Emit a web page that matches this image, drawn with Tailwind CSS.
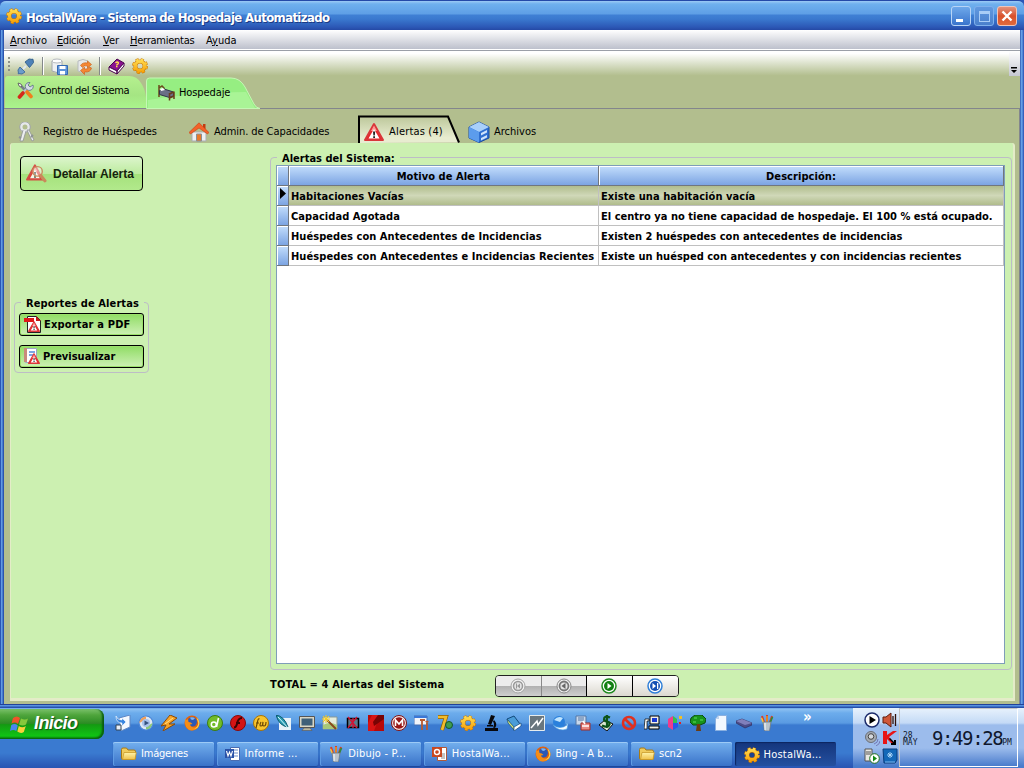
<!DOCTYPE html>
<html lang="es">
<head>
<meta charset="utf-8">
<title>HostalWare</title>
<script src="https://cdn.jsdelivr.net/npm/@tailwindcss/browser@4"></script>
</head>
<body class="w-[1024px] h-[768px] overflow-hidden flex flex-col font-['DejaVu_Sans_Condensed','DejaVu_Sans',sans-serif] [font-stretch:condensed] text-[11px] leading-[14px] text-black whitespace-nowrap">

<svg class="absolute size-0">
  <defs>
    <linearGradient id="gy" gradientUnits="userSpaceOnUse" x1="0" y1="0" x2="0" y2="16"><stop stop-color="#ffe45a"/><stop offset="1" stop-color="#f79a00"/></linearGradient>
    <linearGradient id="fo" x2="0" y2="1"><stop stop-color="#fff3a8"/><stop offset="1" stop-color="#efc14a"/></linearGradient>
    <symbol id="gear" viewBox="0 0 16 16"><circle cx="8" cy="8" r="6.400" fill="none" stroke="#c97400" stroke-width="3" stroke-dasharray="2.900 2.126"/><circle cx="8" cy="8" r="4.600" fill="none" stroke="#c97400" stroke-width="4"/><circle cx="8" cy="8" r="6.200" fill="none" stroke="url(#gy)" stroke-width="2.400" stroke-dasharray="2.400 2.470" stroke-dashoffset="-.2"/><circle cx="8" cy="8" r="4.600" fill="none" stroke="url(#gy)" stroke-width="3"/></symbol>
    <symbol id="warn" viewBox="0 0 20 20"><path d="M10 2 19 18H1Z" fill="#e8262a" stroke="#d9363a" stroke-width="2" stroke-linejoin="round"/><path d="M10 3.500 13 9H7Z" fill="#ff9a96"/><path d="M10 7 15.500 16.500H4.500Z" fill="#fff"/><path d="M9 9.500h2.200l-.4 4H9.400zM9.200 14.300h1.800v1.600H9.200z" fill="#222"/></symbol>
    <symbol id="folder" viewBox="0 0 16 16"><path d="M.5 3.500q0-1.500 1.500-1.500h3.500l1.500 2h6q1.500 0 1.500 1.500V12q0 1.500-1.500 1.500H2Q.5 13.500.5 12Z" fill="#f0cb5c" stroke="#a87a14"/><path d="M3 6.500h12.300l-1.300 7H1.500Z" fill="url(#fo)" stroke="#c99a2c" stroke-width=".8"/></symbol>
    <symbol id="firefox" viewBox="0 0 16 16"><circle cx="8" cy="8" r="7.500" fill="#e0620d"/><circle cx="8.200" cy="6.800" r="4.800" fill="#2b58b5"/><path d="M6 2.500q3-1 5 .8l-2 1.700-2-.5Z" fill="#7fb4ee"/><path d="M1 4Q0 15 8 15.500 15 15 15.500 8q-1 4.500-5.500 4.500-3 0-4-3l2.500-.6Q7 7 4.500 7L4 4 2.500 5Z" fill="#f58d16"/><path d="M12.500 2.500q3.500 3 2.700 7-1 4-5 4.500 4-2.500 4-6Z" fill="#ffd24a"/></symbol>
    <symbol id="paint" viewBox="0 0 16 16"><path d="m3 1 3 9M8 0v10M13 1l-3 9" stroke-width="2" stroke="#d8402a" fill="none"/><path d="m2.500 3 3 7" stroke="#f4c63a" stroke-width="1.500"/><path d="M13.500 2 10 10" stroke="#33883b" stroke-width="1.800"/><path d="M8 1v9" stroke="#e9932a" stroke-width="1.600"/><path d="M4 7h8l-1.500 9h-5Z" fill="#b9c4cc" stroke="#6a7a88" stroke-width=".8"/><path d="M6 8v7" stroke="#fff"/></symbol>
  </defs>
</svg>

<!-- application window -->
<section class="h-[708px] flex flex-col bg-[#2a57b8]">
  <header class="h-[30px] shrink-0 flex items-center pl-[6px] pr-[7px] border-t border-[#2449a8] rounded-t-[6px] bg-[linear-gradient(#9ccaf5_0px,#6fb0ee_3px,#5e9fe6_13px,#3f80d5_14px,#3a79cf_18px,#2c58b6_26px,#2549a5_29px)]">
    <svg class="size-[16px]"><use href="#gear"/></svg>
    <h1 class="ml-[4px] mt-[4px] font-bold text-[13px] leading-[18px] tracking-[-0.620px] text-white [text-shadow:1px_1px_0_#1b3a86]">HostalWare - Sistema de Hospedaje Automatizado</h1>
    <div class="ml-auto flex gap-[3px] mt-px">
      <div class="size-[20px] rounded-[3px] border border-[#b8d4f6] bg-linear-to-b from-[#6ea8ea] to-[#3a74cc] flex items-end pl-[4px] pb-[3px]"><div class="w-[7px] h-[3px] bg-white"></div></div>
      <div class="size-[20px] rounded-[3px] border border-[#7fb0ec] bg-linear-to-b from-[#6199e0] to-[#4a80cc] flex items-center justify-center"><div class="w-[11px] h-[11px] border border-t-[3px] border-[#a9cdf6]"></div></div>
      <div class="size-[20px] rounded-[3px] border border-[#f0c4b8] bg-linear-to-b from-[#e2917a] via-[#d8512c] to-[#e06a3c] flex items-center justify-center"><svg class="size-[12px]" viewBox="0 0 12 12"><path d="m1.500 1.500 9 9m0-9-9 9" stroke="#fff" stroke-width="2.400"/></svg></div>
    </div>
  </header>

  <div class="grow flex flex-col pl-[4px] pr-[4px] bg-[linear-gradient(90deg,#2a55b5_0,#2a55b5_1px,#6aa3e8_1px,#5a92dc_2px,#3467c2_3px,#22429a_4px,#22429a_1020px,#5f9be6_1021px,#6aa3e8_1022px,#3b6cc5_1023px,#2a55b5_1024px)]">
    <nav class="h-[20px] flex items-center pt-[2px] bg-linear-to-b from-white to-[#bdc0cc] border-b border-white pl-[6px]">
      <span class="w-[47px]"><u>A</u>rchivo</span><span class="w-[46px] tracking-[-0.400px]"><u>E</u>dición</span><span class="w-[27px]"><u>V</u>er</span><span class="w-[76px] tracking-[-0.250px]"><u>H</u>erramientas</span><span>A<u>y</u>uda</span>
    </nav>
    <div class="h-[26px] flex items-center border-t border-[#9b9fa8] bg-linear-to-b from-white from-10% to-[#b1bd8c] pl-[4px] [&>svg]:mt-[5px]">
      <div class="w-[2px] h-[16px] mt-[3px] bg-[repeating-linear-gradient(#8e9188_0,#8e9188_2px,transparent_2px,transparent_4px)]"></div>
      <svg class="ml-[7px] size-[17px]" viewBox="0 0 17 17"><path d="m1 16 3-3M13 4l3-3" stroke="#5b86b5" stroke-width="1.500"/><path d="M3 9 8 14 5 16 1.500 15.500 1 12Z" fill="#6c9dcb" stroke="#45719e"/><path d="M8 4 12 1l4 .5.500 3-4 5Z" fill="#4d82b8" stroke="#3a668f"/><path d="m6 11 3-3" stroke="#dfe9f2" stroke-width="2"/></svg>
      <div class="ml-[8px] mt-[4px] w-px h-[18px] bg-[#83888a] shadow-[1px_0_0_#fff]"></div>
      <svg class="ml-[8px] size-[17px]" viewBox="0 0 17 17"><path d="M1 3q5-3 10 0v10q-5 3-10 0Z" fill="#eef0f2" stroke="#a3a8ac"/><ellipse cx="6" cy="3" rx="5" ry="2" fill="#fff" stroke="#b7bbbf"/><path d="M6.500 7.500h10v9h-10Z" fill="#5d93d8" stroke="#336ab4"/><path d="M8.500 8h6v3h-6zM9 13h5v3.500H9z" fill="#fff"/></svg>
      <svg class="ml-[8px] size-[17px]" viewBox="0 0 17 17"><path d="M2 3q5-3 10 0v10q-5 3-10 0Z" fill="#e6e8ea" stroke="#b7bbbf"/><path d="M4.500 7.500q2-3.500 7-2.500V3l4 3.500-4 3.500V8q-4-1-5 1.500ZM15.500 10q-1 4.500-7 4v2.500l-4-4 4-3.500v2q4 .5 5-2Z" fill="#f58634" stroke="#c85a12" stroke-width=".6"/></svg>
      <div class="ml-[6px] mt-[4px] w-px h-[18px] bg-[#83888a] shadow-[1px_0_0_#fff]"></div>
      <svg class="ml-[8px] size-[17px]" viewBox="0 0 17 17"><path d="m1 9 8-8 7 4-7 8Z" fill="#8a1290" stroke="#4a0350"/><path d="m1 9 8 4v3l-8-4ZM9 13l7-8v3l-7 8Z" fill="#fff" stroke="#4a0350"/><path d="M7.500 5q2-2 3 0 0 1-2 2M8 8.500h1.500" stroke="#ffe14a" stroke-width="1.400" fill="none"/></svg>
      <svg class="ml-[7px] size-[16px]"><use href="#gear"/></svg>
      <div class="ml-auto w-[11px] h-full bg-linear-to-b from-white to-[#c5c7d2] flex items-end justify-center pb-[2px]"><svg class="size-[7px]" viewBox="0 0 7 7"><path d="M0 0h6v1.500H0zM0 3h6L3 6Z"/></svg></div>
    </div>

    <!-- main tabs -->
    <div class="h-[33px] bg-[#b2be8e] border-b border-[#83868c] flex pl-px">
      <div class="relative w-[141px] h-[32px]">
        <svg class="absolute inset-0 w-[141px] h-[32px]" viewBox="0 0 141 32"><defs><linearGradient id="t1" x2="0" y2="1"><stop stop-color="#b5f08f"/><stop offset=".6" stop-color="#a5e583"/><stop offset="1" stop-color="#aaf48c"/></linearGradient></defs><path d="M0 32V3q0-3 3-3h121q8 0 12 7 4 6 5 14v11Z" fill="url(#t1)"/></svg>
        <div class="relative flex items-center h-[29px] pl-[12px]">
          <svg class="size-[17px]" viewBox="0 0 17 17"><path d="m3 3 6 6" stroke="#777f8c" stroke-width="2.500"/><path d="m1 1 3 1 1 2-1 1-2-1Z" fill="#eee" stroke="#555" stroke-width=".8"/><path d="M12 5 5 12" stroke="#b9c2d2" stroke-width="3"/><path d="M16 3a4 4 0 1 1-3-2.500l-2 2.500 2 2Z" fill="#d5dbe6" stroke="#5a6a86" stroke-width=".8"/><path d="M6 11 2.500 15" stroke="#d42a1a" stroke-width="3.600" stroke-linecap="round"/><path d="m10 10 4 4.500" stroke="#f07e1c" stroke-width="3.600" stroke-linecap="round"/></svg>
          <span class="ml-[5px] tracking-[-0.360px]">Control del Sistema</span>
        </div>
      </div>
      <div class="relative w-[114px] h-[33px]">
        <svg class="absolute inset-0 w-[114px] h-[33px]" viewBox="0 0 114 33"><path d="M.5 32.500V5q0-3 3-3H85q9 0 14 9l9 17q2 4 6 4.500Z" fill="#96ee82" stroke="#c4f8b4"/><path d="M2 32V24q50-8 98-8l9 16Z" fill="#b6f8a4" opacity=".6"/></svg>
        <div class="relative flex items-center h-[33px] pl-[12px]">
          <svg class="size-[17px]" viewBox="0 0 17 17"><path d="M1 1v12M1 4l3-2 2 2v3" stroke="#6b4a1c" stroke-width="1.500" fill="none"/><path d="M1.500 6.500 6 5l9.500 3v4l-4 1.500-10-3Z" fill="#6a6f86" stroke="#33364a"/><path d="m2 5 3-1 2 2-4 1Z" fill="#fff"/><path d="M11.500 9v7.500M16 7.500V15M11.500 10l4-2M11.500 14 16 12" stroke="#6b3d1c" stroke-width="1.500"/></svg>
          <span class="ml-[4px] tracking-[-0.100px]">Hospedaje</span>
        </div>
      </div>
    </div>

    <!-- secondary tabs -->
    <div class="grow bg-[#b2be8e] border-r border-[#83868c] flex flex-col pl-[6px] pr-[4px] pb-[3px]">
      <div class="h-[34px] flex pl-[7px]">
        <div class="w-[172px] flex items-center pt-[12px]">
          <svg class="size-[21px] -ml-px" viewBox="0 0 21 21"><circle cx="9" cy="5" r="4" fill="none" stroke="#e6e8ea" stroke-width="3"/><circle cx="9" cy="5" r="5.300" fill="none" stroke="#8e9394" stroke-width=".8"/><path d="M7 8 4 19h3l3-10M11 8l5 11 2-1-5-10Z" fill="#eceef0" stroke="#8e9394" stroke-width=".8"/><path d="m5 16-2-1m12 0 2-2" stroke="#8e9394" stroke-width="2"/></svg>
          <span class="ml-[6px]">Registro de Huéspedes</span>
        </div>
        <div class="w-[169px] flex items-center pt-[12px]">
          <svg class="size-[20px]" viewBox="0 0 20 20"><path d="M3 10h14v9H3Z" fill="#eef0f2" stroke="#a9adb2"/><path d="M14 2h2.500v5H14Z" fill="#c43a10"/><path d="M10 .8 20 10.500l-1.500 1.500L10 6l-8.500 6L0 10.500Z" fill="#f4622a" stroke="#c8400f" stroke-width=".6"/><path d="M7.500 12h5v7h-5Z" fill="#e87a2a" stroke="#8b8f95"/></svg>
          <span class="ml-[5px] tracking-[-0.070px]">Admin. de Capacidades</span>
        </div>
        <div class="relative w-[104px]">
          <svg class="absolute left-0 bottom-0 w-[104px] h-[28px]" viewBox="0 0 104 28"><defs><linearGradient id="t2" x2="0" y2="1"><stop stop-color="#bcc79a"/><stop offset=".8" stop-color="#e8ecd0"/></linearGradient></defs><path d="M1 28V1.500H90L101 27.500" fill="url(#t2)" stroke="#000" stroke-width="2"/></svg>
          <div class="relative flex items-center h-full pt-[12px] pl-[6px]">
            <svg class="size-[20px]"><use href="#warn"/></svg><span class="ml-[5px] tracking-[0.180px]">Alertas (4)</span>
          </div>
        </div>
        <div class="flex items-center pt-[12px] pl-[6px]">
          <svg class="size-[22px]" viewBox="0 0 22 22"><path d="M11 1 21 6v11l-10 4.500L1 17V6Z" fill="#2f6fd0" stroke="#1c4ca0"/><path d="M11 1 21 6l-10 5L1 6Z" fill="#a9d0fa"/><path d="M1 6l10 5v10.500L1 17Z" fill="#5c9cec"/><path d="m13 12 6-3v2.500l-6 3Zm0 5 6-3v2.500l-6 3Z" fill="#cfe3fb"/></svg>
          <span class="ml-[4px]">Archivos</span>
        </div>
      </div>

      <main class="grow bg-[#ccf0b1] border-r-2 border-l border-b-[3px] border-[#e4ecc8] rounded-t-[3px] flex pl-[3px]">
        <aside class="w-[256px] pt-[13px]">
          <button class="ml-[6px] w-[123px] h-[35px] rounded-[4px] border border-black bg-[linear-gradient(#dcf5cc,#bdeb9f_50%,#a5e27c_52%,#b2e98c)] flex items-center pl-[5px]">
            <svg class="size-[21px]" viewBox="0 0 20 20"><use href="#warn" width="17" height="18" opacity=".85"/><circle cx="11" cy="8" r="4.500" fill="#ffffff66" stroke="#c98a5a" stroke-width="1.300"/><path d="m14 12 4 5" stroke="#c98a5a" stroke-width="3" stroke-linecap="round"/></svg>
            <span class="ml-[6px] font-['Liberation_Sans',sans-serif] font-bold text-[12px] text-[#14240c]">Detallar Alerta</span>
          </button>
          <fieldset class="mt-[104px] w-[135px] h-[78px] border border-[#bdbdc6] rounded-[4px] pl-[4px] pt-[3px]">
            <legend class="ml-[2px] px-[5px] h-[15px] leading-[17px] font-bold tracking-[0.100px]">Reportes de Alertas</legend>
            <button class="w-[125px] h-[23px] rounded-[3px] border border-black shadow-[inset_0_0_0_1px_#9be06c] bg-linear-to-b from-[#8fdc62] to-[#cdf0b4] flex items-center pl-[4px]">
              <svg class="size-[17px]" viewBox="0 0 17 17"><path d="M3.500.5h9l4 4v12h-13Z" fill="#fff" stroke="#222"/><path d="M0 2h10v4H0Z" fill="#e01818"/><path d="M12 0l5 5h-5Z" fill="#c01818"/><use href="#warn" x="4" y="4" width="12" height="13"/></svg>
              <span class="ml-[3px] font-bold tracking-[0.180px]">Exportar a PDF</span>
            </button>
            <button class="mt-[9px] w-[125px] h-[23px] rounded-[3px] border border-black shadow-[inset_0_0_0_1px_#9be06c] bg-linear-to-b from-[#8fdc62] to-[#cdf0b4] flex items-center pl-[4px]">
              <svg class="size-[17px]" viewBox="0 0 17 17"><path d="M1.500.5h11v14h-11Z" fill="#fff" stroke="#9aa6c4"/><path d="M0 0h3v14H0Z" fill="#c98a7c"/><path d="M5 3h6v2H5zM5 6h5v2H5z" fill="#7ea6e4"/><use href="#warn" x="4" y="4" width="12" height="13"/></svg>
              <span class="ml-[2px] font-bold">Previsualizar</span>
            </button>
          </fieldset>
        </aside>
        <div class="flex flex-col pt-[7px]">
          <fieldset class="w-[742px] h-[520px] border border-[#bdbdc6] rounded-[4px] pl-[5px]">
            <legend class="ml-[1px] px-[5px] h-[15px] leading-[17px] font-bold">Alertas del Sistema:</legend>
            <div class="w-[729px] h-[499px] bg-white border border-[#7f9db9] font-bold tracking-[0.060px]">
              <div class="grid grid-cols-[12px_310px_1fr] grid-rows-[20px_20px_20px_20px_20px] [&>*]:border-b [&>*]:border-r [&>*]:border-[#c0c0c0] [&>*]:leading-[21px] [&>*]:pl-[2px] [&>.h]:border-[#70767e] [&>.h]:bg-linear-to-b [&>.h]:from-[#c4defc] [&>.h]:to-[#7ca4e2] [&>.h]:pl-0 [&>.h]:text-center [&>.h]:shadow-[inset_1px_1px_0_#fff]">
                <div class="h"></div><div class="h">Motivo de Alerta</div><div class="h">Descripción:</div>
                <div class="h pt-[2px]"><svg class="ml-[3px] w-[6px] h-[11px]" viewBox="0 0 6 11"><path d="M0 0l6 5.500L0 11Z"/></svg></div><div class="bg-linear-to-b from-[#b0bc8c] via-[#d0d8b8] to-[#b0bc8c]">Habitaciones Vacías</div><div class="bg-linear-to-b from-[#b0bc8c] via-[#d0d8b8] to-[#b0bc8c]">Existe una habitación vacía</div>
                <div class="h"></div><div>Capacidad Agotada</div><div><span class="tracking-[0.020px]">El centro ya no tiene capacidad de hospedaje. El 100 % está ocupado.</span></div>
                <div class="h"></div><div>Huéspedes con Antecedentes de Incidencias</div><div><span class="tracking-[0.020px]">Existen 2 huéspedes con antecedentes de incidencias</span></div>
                <div class="h"></div><div><span class="tracking-[0.080px]">Huéspedes con Antecedentes e Incidencias Recientes</span></div><div><span class="tracking-[0.020px]">Existe un huésped con antecedentes y con incidencias recientes</span></div>
              </div>
            </div>
          </fieldset>
          <div class="flex pt-[5px]">
            <strong class="w-[225px] pt-[3px] tracking-[0.170px]">TOTAL = 4 Alertas del Sistema</strong>
            <div class="flex w-[184px] h-[22px] rounded-[4px] border border-[#222] overflow-hidden [&>*]:w-[46px] [&>*]:flex [&>*]:items-center [&>*]:justify-center [&>*]:border-r [&>*:last-child]:border-r-0">
              <div class="bg-[linear-gradient(#ececec_50%,#b0b0b0_50%,#cfcfcf)] border-[#888]"><svg class="size-[16px]" viewBox="0 0 16 16"><circle cx="8" cy="8" r="7" fill="#f0f0f0" stroke="#a4a4a4"/><circle cx="8" cy="8" r="4.500" fill="#e4e4e4" stroke="#999" stroke-width="1.500"/><path d="M6 5.500h1v5H6zM10 5.500v5L7 8Z" fill="#999"/></svg></div>
              <div class="bg-[linear-gradient(#ececec_50%,#b0b0b0_50%,#cfcfcf)] border-black"><svg class="size-[16px]" viewBox="0 0 16 16"><circle cx="8" cy="8" r="7" fill="#f0f0f0" stroke="#888"/><circle cx="8" cy="8" r="4.500" fill="#e4e4e4" stroke="#777" stroke-width="1.800"/><path d="M9.500 5v6L5.500 8Z" fill="#666"/></svg></div>
              <div class="bg-linear-to-b from-white to-[#dcd9d0] border-black"><svg class="size-[16px]" viewBox="0 0 16 16"><circle cx="8" cy="8" r="7" fill="#fff" stroke="#1f8a1f" stroke-width="1.500"/><circle cx="8" cy="8" r="5" fill="#128012"/><path d="M6.500 5v6L10.500 8Z" fill="#fff"/></svg></div>
              <div class="bg-linear-to-b from-white to-[#dcd9d0]"><svg class="size-[16px]" viewBox="0 0 16 16"><circle cx="8" cy="8" r="7" fill="#fff" stroke="#2f7fd8" stroke-width="1.500"/><circle cx="8" cy="8" r="5" fill="#1450b4"/><path d="M5.500 5v6L9 8ZM10 5h1.300v6H10Z" fill="#fff"/></svg></div>
            </div>
          </div>
        </div>
      </main>
    </div>
    <div class="h-[4px] -mx-[4px] bg-[linear-gradient(#22429a_0,#22429a_1px,#5f9be6_1px,#4f8ad8_2px,#2c58b6_3px,#2449a0_4px)]"></div>
  </div>
</section>

<!-- taskbar -->
<footer class="h-[60px] flex text-white bg-[linear-gradient(#5f9be6_0px,#8cc0f2_1px,#6cacec_5px,#5a9be2_15px,#3a7ad0_17px,#3a7ad0_45px,#2a56b4_59px)]">
  <div class="w-[113px]">
    <div class="w-[104px] h-[30px] mt-px rounded-r-[8px] bg-[linear-gradient(#7ac06a,#4fa53c_20%,#2c8c24_48%,#149a12_52%,#10c414_90%,#0b8a10)] shadow-[inset_-2px_-1px_2px_#0a5c10] flex items-center pl-[10px]">
      <svg class="size-[19px]" viewBox="0 0 19 19"><path d="M3 3q4-3 7 0L8 9Q5 6.500 1.500 8.500Z" fill="#f0542a"/><path d="M11 3.500q4 2 7 0L16 9.500q-3 2-7 0Z" fill="#86c83c"/><path d="M1.300 10q3.500-2 6.500.5L6.300 16Q3.500 14 0 16Z" fill="#4a86f0"/><path d="M8.800 11q3.500 2.500 7 0l-2 6q-3 2-6.500-.5Z" fill="#fbd03a"/></svg>
      <span class="ml-[5px] -mt-[2px] font-['Liberation_Sans',sans-serif] font-bold italic text-[18px] leading-[20px] tracking-[-0.600px] [text-shadow:1px_1px_1px_#14501a]">Inicio</span>
    </div>
  </div>
  <div class="w-[740px] flex flex-col">
    <div class="h-[34px] flex items-center pb-[4px] -ml-[2px] [&>svg]:w-[16px] [&>svg]:h-[16px] [&>svg]:mx-[3.520px] [&>svg]:shrink-0">
      <svg viewBox="0 0 16 16"><path d="m4 3 11-3v12l-9 4Z" fill="#f4f8fe" stroke="#5d86c4"/><path d="M1 1q1 4 6 4V3l4 4-4 4V8Q1 8 1 1Z" fill="#3a86e0" stroke="#fff" stroke-width=".6"/><path d="M1 10h5v5H1Z" fill="#e8eef8" stroke="#345"/></svg>
      <svg viewBox="0 0 16 16"><circle cx="8" cy="8" r="7" fill="#dfe8f4" stroke="#4a86d8" stroke-width="1.200"/><path d="M1.500 8A6.500 6.500 0 0 1 8 1.500V4Z" fill="#f0a05a"/><path d="M14.500 8A6.500 6.500 0 0 1 8 14.500V12Z" fill="#8cc878"/><circle cx="8" cy="8" r="4" fill="#a8c2ec"/><path d="M6.500 5.500v5L11 8Z" fill="#34507c"/></svg>
      <svg viewBox="0 0 16 16"><path d="M9 0 16 3 8 9 14 9 2 16 5 10 0 11Z" fill="#f7a428" stroke="#8a4a08"/><path d="m4 9 8-6" stroke="#ffe08a"/></svg>
      <svg><use href="#firefox"/></svg>
      <svg viewBox="0 0 16 16"><circle cx="8" cy="8" r="7.500" fill="#72bc28" stroke="#3c7c10"/><circle cx="6.800" cy="9.500" r="2.500" fill="none" stroke="#fff" stroke-width="1.500"/><path d="M11.500 3 9.500 12" stroke="#fff" stroke-width="1.600"/></svg>
      <svg viewBox="0 0 16 16"><circle cx="8" cy="8" r="7.500" fill="#d41414" stroke="#8a0808"/><path d="M12 3Q8 3 7 9 6 12.500 4 12.500M6 8h4" stroke="#3a0404" stroke-width="2" fill="none"/></svg>
      <svg viewBox="0 0 16 16"><circle cx="8" cy="8" r="7.500" fill="#f8c42c" stroke="#a87408"/><path d="M6.500 4Q5 3 4.500 7L3 13M3 8h3M8 7q-2 4 0 4t2-4q-1 4 1 4t2-4" stroke="#6b4804" stroke-width="1.200" fill="none"/></svg>
      <svg viewBox="0 0 16 16"><path d="M3 3h12v12H3Z" fill="#e8f2f8"/><path d="M0 0q8 1 12 12Q3 11 0 0Z" fill="#2a9cb4" stroke="#0c5c70"/><path d="m2 2 11 12" stroke="#dff"/></svg>
      <svg viewBox="0 0 16 16"><path d="M.5 1.500h15v11H.5Z" fill="#d9d6c4" stroke="#555"/><path d="M2.500 3.500h11v7h-11Z" fill="#3f6078"/><path d="M5 13h6l2 2.500H3Z" fill="#bdb99f" stroke="#555" stroke-width=".6"/></svg>
      <svg viewBox="0 0 16 16"><path d="M1 2h14v12H1Z" fill="#e4ecdc" stroke="#899"/><path d="M1 10q7-4 14 0v4H1Z" fill="#a8c878"/><path d="m5 5 9 9" stroke="#8a4a1c" stroke-width="2"/><path d="M4 0v8M0 4h8M1 1l6 6m0-6-6 6" stroke="#f8cc1c"/></svg>
      <svg viewBox="0 0 16 16"><path d="M2.500 3.500h11v9h-11Z" fill="#5a7a8c" stroke="#000" stroke-width="1.500"/><path d="m3 2 9 11m0-11L3 13M8 3v10" stroke="#d01434" stroke-width="1.400"/></svg>
      <svg viewBox="0 0 16 16"><path d="M0 0h16v16H0Z" fill="#b80808"/><path d="M4 0h8L6 16H0V8Z" fill="#d81414"/><path d="m10 0-5 7 1 4L16 4V0Z" fill="#780404"/></svg>
      <svg viewBox="0 0 16 16"><circle cx="8" cy="8" r="7.500" fill="#f0e0e0" stroke="#801010"/><circle cx="8" cy="8" r="5.800" fill="#981414"/><path d="M4.500 11V5L8 9l3.500-4v6" stroke="#fff" stroke-width="1.600" fill="none"/></svg>
      <svg viewBox="0 0 16 16"><path d="M0 1h13v9H0Z" fill="#f2f5fb" stroke="#456cb0"/><path d="M0 1h13v2H0Z" fill="#3a78d8"/><path d="M8 6v9M6 5h5M13 6v9m-1-9q1 2 2 0" stroke="#b85a30" stroke-width="1.800" fill="none"/></svg>
      <svg viewBox="0 0 16 16"><path d="M1 2h8L5 15" stroke="#8a5c08" stroke-width="4" fill="none"/><path d="M1 2h8L5 15" stroke="#f2bc2c" stroke-width="2.600" fill="none"/><circle cx="12" cy="10" r="3.500" fill="#3f9c50" stroke="#14582c"/></svg>
      <svg><use href="#gear"/></svg>
      <svg viewBox="0 0 16 16"><path d="m8 0 4 1-4 9-3-1ZM2 13h13v3H2ZM4 10h6v1.500H4ZM11 5q4 4 1 8l-2-.5q2-3 0-6Z" fill="#08080c"/></svg>
      <svg viewBox="0 0 16 16"><path d="m1 4 7-3 6 8-6 5Z" fill="#4a9cd8" stroke="#124a7c"/><path d="m1 4 7 8v3L2 8Z" fill="#d8e878" stroke="#124a7c" stroke-width=".7"/><path d="M8 12l7-4v3l-7 5Z" fill="#fff" stroke="#124a7c" stroke-width=".7"/></svg>
      <svg viewBox="0 0 16 16"><path d="M.5.5h15v15H.5Z" fill="#69767e" stroke="#e6ecee"/><path d="m2 13 6-7 1 4 5-7" stroke="#fff" stroke-width="1.500" fill="none"/></svg>
      <svg viewBox="0 0 16 16"><circle cx="7" cy="7" r="6" fill="#2a80dc"/><path d="M2 5q4-5 9-2L8 7Z" fill="#bfe4ff"/><path d="M1 10q7 5 14 0l-1-2 2 1-1 5q-8 3-14-4Z" fill="#f4fbff" stroke="#4aa0e0" stroke-width=".6"/></svg>
      <svg viewBox="0 0 16 16"><path d="M1 1h10v9H1Z" fill="#c8d8ec" stroke="#5576a4"/><path d="M3 3h6M3 5h6" stroke="#5576a4"/><path d="M6 8h9v7H6Z" fill="#e88a84" stroke="#a42c24"/><path d="M7 11h7M8 6l2 3" stroke="#fff" stroke-width="1.500"/></svg>
      <svg viewBox="0 0 16 16"><path d="m1 10 6-5 8 4-6 7Z" fill="#dce8d4" stroke="#111"/><path d="M12 2.500Q6 0 6 4.500 6 6 9 6.500q4 1 2 4-2 2.500-7 0M9 0v13" stroke="#0c5418" stroke-width="2.200" fill="none"/></svg>
      <svg viewBox="0 0 16 16"><circle cx="8" cy="8" r="6" fill="none" stroke="#e03020" stroke-width="2.600"/><path d="m4 4 8 8" stroke="#e03020" stroke-width="2.600"/></svg>
      <svg viewBox="0 0 16 16"><path d="M6 1h9v8H6ZM5 11h10v3H5Z" fill="#f0f0ea" stroke="#000"/><path d="M8 3h5v4H8Z" fill="#1838d0"/><path d="M1 4h4v2H3v8H0Z" fill="#fff" stroke="#000" stroke-width=".7"/></svg>
      <svg viewBox="0 0 16 16"><path d="M6 1 1 4v8l5 3Z" fill="#f03c8c"/><path d="m6 1 4 3v4H6Z" fill="#30c050"/><path d="M6 8h5v4l-5 3Z" fill="#2858e8"/><path d="M12 1h3v3h-3Z" fill="#f4c020"/><path d="M12 7h2v2h-2Z" fill="#e82020"/></svg>
      <svg viewBox="0 0 16 16"><path d="M5 0h7l4 4-1 4-5 2H3L0 7l1-4Z" fill="#18941c" stroke="#0a4c10"/><path d="M4 3h3m3 2h3M3 7h3" stroke="#5ae05a"/><path d="M7 9h3l1 7H6Z" fill="#6c3c10"/></svg>
      <svg viewBox="0 0 16 16"><path d="M5 .5h8.500v15h-11V4Z" fill="#f2f8ff" stroke="#8ab0e0"/><path d="M2.500 4H6V.5" fill="#bcd4f0"/></svg>
      <svg viewBox="0 0 16 16"><path d="m0 6 6-2 10 4v2l-7 3L0 8Z" fill="#4c4c88" stroke="#2a2a58" stroke-width=".6"/><path d="m0 6 6-2 10 4-7 2Z" fill="#8080bc"/></svg>
      <svg><use href="#paint"/></svg>
      <span class="self-start ml-[24px] mt-[2px] text-[15px] font-bold">»</span>
    </div>
    <div class="flex gap-[2.600px] [&>div]:w-[101px] [&>div]:h-[24px] [&>div]:rounded-[2px] [&>div]:flex [&>div]:items-center [&>div]:pl-[8px] [&>div]:gap-[4px] [&>div]:bg-linear-to-b [&>.n]:from-[#74b0ee] [&>.n]:to-[#3a72c8] [&>.n]:shadow-[inset_0_1px_0_#9ccaf6,inset_1px_0_0_#5f9ce4,0_1px_1px_#1f4698] [&_svg]:size-[16px]">
      <div class="n tracking-[-0.200px]"><svg><use href="#folder"/></svg><span>Imágenes</span></div>
      <div class="n tracking-[0.200px]"><svg viewBox="0 0 16 16"><path d="M5.500 1.500h9v13h-9Z" fill="#fff" stroke="#4a6cb0"/><path d="M9 4h4M9 7h4M9 10h4" stroke="#6a8cc8"/><path d="M0 3h9v9H0Z" fill="#2a52a8"/><path d="m1.500 5 1.500 5 1.500-4L6 10l1.500-5" stroke="#fff" stroke-width="1.100" fill="none"/></svg><span>Informe ...</span></div>
      <div class="n tracking-[0.200px]"><svg><use href="#paint"/></svg><span>Dibujo - P...</span></div>
      <div class="n tracking-[0.200px]"><svg viewBox="0 0 16 16"><path d="M5.500 1.500h9v13h-9Z" fill="#fff" stroke="#b05a3a"/><path d="M9 8h4M9 10h4M9 12h4" stroke="#888"/><path d="M0 1h10v10H0Z" fill="#c84820"/><circle cx="5" cy="6" r="2.500" fill="none" stroke="#fff" stroke-width="1.400"/></svg><span>HostalWa...</span></div>
      <div class="n"><svg><use href="#firefox"/></svg><span>Bing - A b...</span></div>
      <div class="n"><svg><use href="#folder"/></svg><span>scn2</span></div>
      <div class="from-[#14357c] to-[#2450a0] shadow-[inset_1px_1px_1px_#0c2560] tracking-[0.200px]"><svg class="ml-px mt-px"><use href="#gear"/></svg><span class="mt-px">HostalWa...</span></div>
    </div>
  </div>
  <div class="w-[171px] flex bg-[linear-gradient(#e8f2fc_0px,#c4daf6_15px,#9cbcec_17px,#9cbcec_40px,#4a7ccc_58px)]">
    <div class="w-[46px] grid grid-cols-[17px_17px] grid-rows-[18px_18px_18px] gap-x-[1px] gap-y-0 pl-[11px] pt-[4px] [&>svg]:size-[16px]">
      <svg viewBox="0 0 16 16"><circle cx="8" cy="8" r="7" fill="#fff" stroke="#1c2c6c" stroke-width="1.500"/><path d="M5.500 4v8L12 8Z"/></svg>
      <svg viewBox="0 0 16 16"><path d="M1 5h3l5-4v14l-5-4H1Z" fill="#d0583a" stroke="#601c0c"/><path d="M11 4v8M13.500 2v12" stroke="#301008" stroke-width="1.300"/></svg>
      <svg viewBox="0 0 16 16"><circle cx="7" cy="7" r="5.500" fill="#a4aab2" stroke="#6a6e76"/><circle cx="7" cy="6.500" r="2.800" fill="#d4d8dc" stroke="#444"/><path d="M10 14q4-1 4-5M12 16q4-2 4-5" stroke="#7478b4" fill="none"/></svg>
      <svg viewBox="0 0 16 16"><path d="M1 1h4v4l6-4h4L7 7l5 6H9L5 9v5H1Z" fill="#e81414"/><path d="m8 8 4 4v-2h2v5H9v-2h2L7 9Z"/></svg>
      <svg viewBox="0 0 16 16"><path d="M1 1h7v12H1Z" fill="#e8e8e4" stroke="#555"/><path d="M2 4h5M2 6h5" stroke="#555"/><circle cx="10.500" cy="10.500" r="4.800" fill="#fff" stroke="#1c6c1c"/><path d="M9 7.500v6l4-3Z" fill="#128a12"/></svg>
      <svg viewBox="0 0 16 16"><path d="M1 1h14v11l-2 3H2Z" fill="#1468b8" stroke="#0a3c7c"/><path d="M5 7h6M8 4v6M6 5l4 4m0-4L6 9" stroke="#b4dcfa" stroke-width=".9"/><path d="M3 14h10" stroke="#7cb8f0"/></svg>
    </div>
    <div class="w-[119px] h-[59px] border border-[#c4c4c4] border-b-white border-r-white flex items-center text-[#10182c] font-['DejaVu_Sans_Mono',monospace]">
      <div class="w-[32px] pl-[3px] pt-[3px] text-[8px] leading-[7px] text-left">28<br>MAY</div>
      <div class="text-[19px] leading-[20px] tracking-[-1.400px]">9:49:28</div>
      <div class="text-[8px] leading-[8px] pt-[10px]">PM</div>
    </div>
  </div>
</footer>
</body>
</html>
